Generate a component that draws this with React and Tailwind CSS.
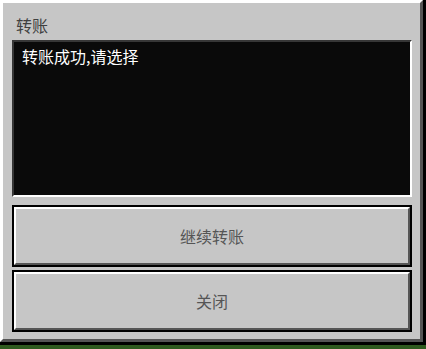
import React from 'react';

const font = { fontFamily: '"Noto Sans CJK SC", "Noto Sans", sans-serif' };

const McButton = ({ label }) => (
  <button className="w-[400px] h-[62px] border-2 border-black block p-0 bg-[#c6c6c6]">
    <div className="w-full h-full border-t-2 border-l-2 border-white border-r-2 border-b-2 border-r-[#555555] border-b-[#555555] flex items-center justify-center">
      <span className="text-[16px] leading-[16px] text-[#555555]">{label}</span>
    </div>
  </button>
);

const App = () => {
  return (
    <div className="w-[426px] h-[349px] bg-[#2f5a1f] overflow-hidden" style={font}>
      <div className="w-[426px] h-[345px] border-r-[3px] border-b-[3px] border-black">
        <div className="w-full h-full bg-[#c6c6c6] border-t-[3px] border-l-[3px] border-white border-r-[3px] border-b-[3px] border-r-[#555555] border-b-[#555555] pl-[9px]">
          <div className="h-[37px] pt-[14px] pl-[4px] text-[16px] leading-[16px] text-[#404040]">转账</div>
          <div className="w-[400px] h-[157px] bg-[#0a0a0a] border-t-2 border-l-2 border-[#373737] border-r-2 border-b-2 border-r-white border-b-white pt-[6px] pl-[8px]">
            <p className="text-[16px] leading-[16px] text-white">转账成功,请选择</p>
          </div>
          <div className="mt-[8px] flex flex-col gap-[3px]">
            <McButton label="继续转账" />
            <McButton label="关闭" />
          </div>
        </div>
      </div>
    </div>
  );
};

export default App;
